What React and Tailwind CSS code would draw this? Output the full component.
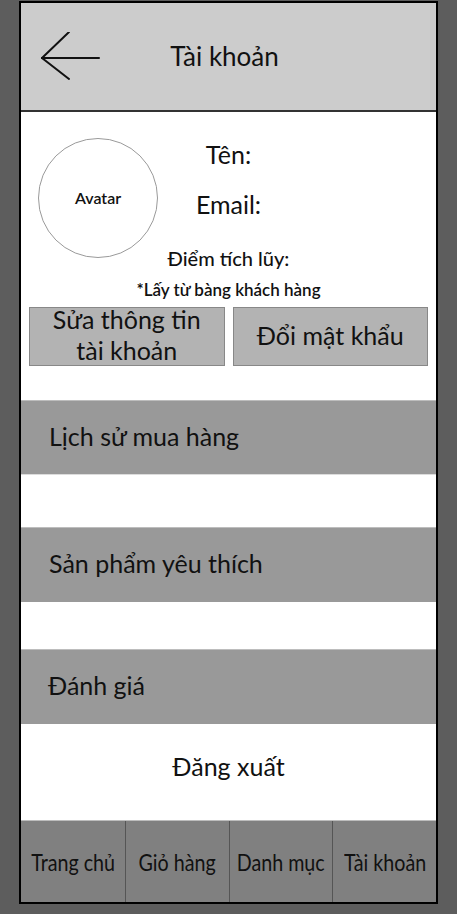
import React from 'react';

// Back arrow drawn as thin strokes, like the wireframe
const BackArrow = () => (
    <svg width="60" height="50" viewBox="0 0 60 50" fill="none" stroke="#111" strokeWidth="2" strokeLinecap="round">
        <line x1="1" y1="26" x2="58" y2="26" />
        <line x1="1" y1="26" x2="28" y2="0" />
        <line x1="1" y1="26" x2="28" y2="47" />
    </svg>
);

const menuItems = ['Lịch sử mua hàng', 'Sản phẩm yêu thích', 'Đánh giá'];
const tabs = ['Trang chủ', 'Giỏ hàng', 'Danh mục', 'Tài khoản'];

const App = () => {
    return (
        <div className="min-h-[914px] bg-[#5d5d5d] pt-[1px] pl-[19px] text-[#111]" style={{ fontFamily: 'Lato, "Open Sans", sans-serif' }}>
            <div className="w-[419px] h-[903px] border-2 border-black bg-white flex flex-col">
                {/* Header */}
                <div className="h-[109px] bg-[#cccccc] border-b-2 border-[#333] grid grid-cols-[80px_1fr_80px] items-center">
                    <div className="pl-[20px] pt-[1px]">
                        <BackArrow />
                    </div>
                    <div className="text-center text-[26px] pr-[8px]">Tài khoản</div>
                    <div />
                </div>

                {/* Profile info */}
                <div className="h-[288px] pt-[26px]">
                    <div className="grid grid-cols-[137px_1fr_137px]">
                        <div className="row-span-3 pl-[17px]">
                            <div className="w-[120px] h-[120px] rounded-full border border-[#9a9a9a] flex items-center justify-center text-[16px] font-semibold">
                                Avatar
                            </div>
                        </div>
                        <div className="col-start-2 text-center text-[25px] leading-[30px] mt-[1px]">Tên:</div>
                        <div className="col-start-2 text-center text-[25px] leading-[30px] mt-[20px]">Email:</div>
                        <div className="col-start-2 text-center text-[20px] leading-[26px] mt-[26px] whitespace-nowrap font-medium">Điểm tích lũy:</div>
                    </div>
                    <div className="text-center text-[17px] leading-[20px] mt-[9px] font-semibold">*Lấy từ bàng khách hàng</div>
                    <div className="grid grid-cols-2 gap-2 px-2 mt-[7px]">
                        <button className="h-[59px] bg-[#b3b3b3] border border-[#888] text-[25px] leading-[31px] flex flex-col items-center justify-start">
                            <span className="-mt-[4px]">Sửa thông tin</span>
                            <span>tài khoản</span>
                        </button>
                        <button className="h-[59px] bg-[#b3b3b3] border border-[#888] text-[25px] pb-[2px]">
                            Đổi mật khẩu
                        </button>
                    </div>
                </div>

                {/* Menu list */}
                <div className="flex flex-col">
                    <div className="h-[74px] bg-[#999999] border-t border-[#bdbdbd] flex items-center pl-[28px] pb-[2px] text-[25px]">{menuItems[0]}</div>
                    <div className="h-[53px] border-t border-[#dcdcdc]" />
                    <div className="h-[75px] bg-[#999999] border-t border-[#bdbdbd] flex items-center pl-[28px] pb-[2px] text-[25px]">{menuItems[1]}</div>
                    <div className="h-[47px]" />
                    <div className="h-[75px] bg-[#999999] border-t border-[#bdbdbd] flex items-center pl-[27px] pb-[2px] text-[25px]">{menuItems[2]}</div>
                    <div className="h-[96px] flex items-center justify-center pb-[10px] text-[25px]">Đăng xuất</div>
                </div>

                {/* Bottom navigation */}
                <div className="flex-1 grid grid-cols-4 bg-[#808080] border-t border-[#bdbdbd]">
                    {tabs.map((tab, i) => (
                        <div
                            key={tab}
                            className={`flex items-center justify-center overflow-hidden ${i > 0 ? 'border-l border-[#555]' : ''}`}
                        >
                            <span className="inline-block whitespace-nowrap text-[24px] scale-x-[0.82]">{tab}</span>
                        </div>
                    ))}
                </div>
            </div>
        </div>
    );
};

export default App;
